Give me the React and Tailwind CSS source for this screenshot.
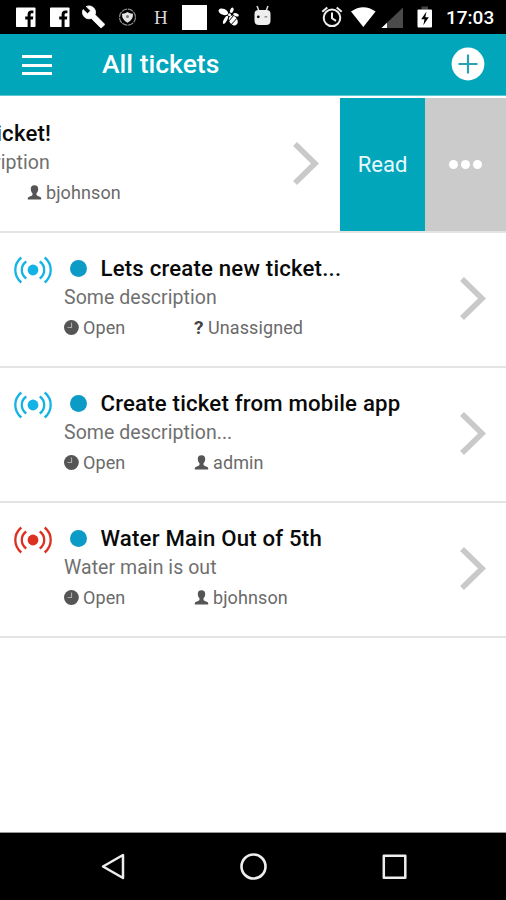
const tickets = [
  { title: 'Lets create new ticket...', description: 'Some description', user: null, tone: 'text-[#13b3e6]' },
  { title: 'Create ticket from mobile app', description: 'Some description...', user: 'admin', tone: 'text-[#13b3e6]' },
  { title: 'Water Main Out of 5th', description: 'Water main is out', user: 'bjohnson', tone: 'text-[#dc3020]' },
];

function Facebook() {
  return (
    <svg width="20" height="34" viewBox="0 0 20 34">
      <rect x="0" y="7.5" width="19.5" height="19.5" rx="0.8" fill="#fff" />
      <path d="M11.6 27v-7.6H9.2v-2.8h2.4v-2.1c0-2.6 1.5-3.9 3.8-3.9h2v2.7h-1.3c-1.2 0-1.5.6-1.5 1.5v1.8h2.7l-.4 2.8h-2.3V27z" fill="#000" />
    </svg>
  );
}

function StatusBar() {
  return (
    <div className="flex h-[34px] shrink-0 items-start bg-black pl-4 text-white">
      <div className="flex w-[66px] gap-[14px]">
        <Facebook />
        <Facebook />
      </div>
      <svg className="shrink-0" width="28" height="34" viewBox="82 0 28 34">
        <path transform="translate(81.500 4.800) scale(1)" d="M22.7 19l-9.1-9.1c.9-2.3.4-5-1.5-6.9-2-2-5-2.4-7.4-1.3L9 6 6 9 1.600 4.700C.4 7.100.9 10.100 2.900 12.100c1.900 1.900 4.600 2.400 6.900 1.500l9.100 9.100c.4.400 1 .400 1.400 0l2.300-2.300c.5-.4.5-1.100.1-1.400z" fill="#fff" stroke="#fff" strokeWidth="0.800" />
      </svg>
      <svg className="shrink-0" width="44" height="34" viewBox="110 0 44 34">
        <circle cx="127.500" cy="17.200" r="8" fill="none" stroke="#8c8c8c" strokeWidth="1.200" strokeDasharray="5.500 0.800" />
        <path d="M122 13.800q3 .2 5.500-1.800q2.500 2 5.500 1.800q.3 6-5.500 9q-5.800-3-5.500-9z" fill="#e4e4e4" />
        <circle cx="127.500" cy="16.500" r="1.500" fill="#777" />
      </svg>
      <span className="w-[28px] pt-[7px] font-['Liberation_Serif',serif] text-[19px] leading-[22px] text-[#d8d8d8]">H</span>
      <span className="mt-[5px] h-[25px] w-[25px] shrink-0 bg-white" />
      <svg className="shrink-0" width="42" height="34" viewBox="207 0 42 34">
        <g fill="#fff">
          <ellipse cx="223.300" cy="11.800" rx="5" ry="3" transform="rotate(22 223.300 11.800)" />
          <ellipse cx="231.800" cy="10.200" rx="1.600" ry="2.800" transform="rotate(25 231.800 10.200)" />
          <circle cx="229.500" cy="14.800" r="1.500" />
          <ellipse cx="225.500" cy="19.800" rx="1.600" ry="4.500" transform="rotate(28 225.500 19.800)" />
          <ellipse cx="236" cy="14.800" rx="2.900" ry="1.500" transform="rotate(18 236 14.800)" />
          <ellipse cx="233.300" cy="20.500" rx="4" ry="5.300" transform="rotate(-35 233.300 20.500)" />
        </g>
        <path d="M228.500 21.500l5-6M231 24.800l6-6.500" stroke="#000" strokeWidth="1" />
      </svg>
      <svg className="shrink-0" width="72" height="34" viewBox="249 0 72 34">
        <path d="M257 6l2 5M268 6l-2 5" stroke="#ddd" strokeWidth="1.500" />
        <path d="M254.500 14q0-4 4-4h8q4 0 4 4v6.500q0 4.500-4.500 4.500h-7q-4.500 0-4.500-4.500z" fill="#eee" />
        <circle cx="258.300" cy="16.800" r="1.400" fill="#111" />
        <path d="M264.500 16.800h2.800" stroke="#888" strokeWidth="1.400" />
      </svg>
      <svg className="shrink-0" width="28" height="34" viewBox="321 0 28 34" fill="none" stroke="#eee" strokeWidth="2">
        <circle cx="332" cy="17.800" r="8.300" />
        <path d="M332 12.500v5.800l4 2.500M322.300 11.800l5-4.200M341.700 11.800l-5-4.200" />
      </svg>
      <svg className="shrink-0" width="62" height="34" viewBox="349 0 62 34">
        <path d="M351 11.500q12.300-8.500 24.600 0L363.300 27z" fill="#fff" />
        <path d="M403 7.500V28h-21.500z" fill="#4a4a4a" />
        <path d="M387 22.800V28h-5.500z" fill="#fff" />
      </svg>
      <svg className="shrink-0" width="35" height="34" viewBox="411 0 35 34">
        <path d="M421.500 6.500h6.500v3h-6.500z" fill="#444" />
        <rect x="417.500" y="9.500" width="14.500" height="18" rx="1" fill="#fff" />
        <path d="M426.500 11.500l-5.300 7.800h3.300l-1.200 6 5.500-8h-3.500z" fill="#000" />
      </svg>
      <span className="pt-[7px] text-[19px] leading-[22px] font-medium">17:03</span>
    </div>
  );
}

function Signal({ tone }) {
  return (
    <svg className={tone} width="40" height="28" viewBox="13 256 40 28" fill="none" stroke="currentColor" strokeWidth="2.300">
      <circle cx="33" cy="270" r="5.400" fill="currentColor" stroke="none" />
      <path d="M26.300 261.500Q21.800 264.500 21.800 270T26.300 278.500M39.700 261.500Q44.200 264.500 44.200 270T39.700 278.500" />
      <path d="M21.300 257.500Q15.300 262.500 15.300 270T21.300 282.500M44.700 257.500Q50.700 262.500 50.700 270T44.700 282.500" />
    </svg>
  );
}

function Chevron() {
  return (
    <svg className="mt-[44px] mr-[19px] shrink-0" width="28" height="44" viewBox="459 277 28 44" fill="none" stroke="#c9c9c9" strokeWidth="5.600">
      <path d="M462 279l20 19.500L462 318" />
    </svg>
  );
}

function Clock() {
  return (
    <svg width="15" height="15" viewBox="0 0 15 15">
      <circle cx="7.400" cy="7.500" r="7.400" fill="#555" />
      <path d="M7.500 2.500v5H3.500" fill="none" stroke="#aaa" strokeWidth="1.200" />
    </svg>
  );
}

function User() {
  return (
    <svg width="15" height="15" viewBox="0 0 15 15" fill="#555">
      <path d="M7.500 0.300c2.700 0 3.700 1.600 3.700 3.800 0 1.800-.7 3.300-1.700 4.200v1.300c0 .6.300.9.900 1.200l2.900 1.200c.6.300.9.700.9 1.300v1.200H.8v-1.200c0-.6.300-1 .9-1.300l2.900-1.200c.6-.3.900-.6.900-1.200V8.300C4.500 7.400 3.800 5.900 3.800 4.100 3.800 1.900 4.800.3 7.500.3z" />
    </svg>
  );
}

function Ticket({ title, description, user, tone, titleClass = '' }) {
  return (
    <div className="flex h-[133px] w-[506px] shrink-0">
      <div className="w-16 shrink-0 pt-[23px] pl-[13px]">
        <Signal tone={tone} />
      </div>
      <div className="min-w-0 flex-1 pt-[21px] whitespace-nowrap">
        <div className="flex h-[29px] items-center">
          <span className="mr-[13.500px] ml-[6px] h-[17px] w-[17px] rounded-full bg-[#0b9bc6]" />
          <span className={`text-[22.200px] leading-[29px] font-medium tracking-[0.190px] text-[#0a0a0a] ${titleClass}`}>{title}</span>
        </div>
        <div className="h-[30px] text-[19.500px] leading-[29px] tracking-[0.050px] text-[#707070]">{description}</div>
        <div className="flex h-[29px] items-center text-[18px] leading-[29px] tracking-[0.1px] text-[#6a6a6a]">
          <div className="flex w-[130px] items-center gap-1">
            <Clock />
            <span>Open</span>
          </div>
          <div className="flex items-center gap-1">
            {user ? <User /> : <span className="w-[10px] text-[19px] font-bold text-[#444]">?</span>}
            <span>{user ?? 'Unassigned'}</span>
          </div>
        </div>
      </div>
      <Chevron />
    </div>
  );
}

export default function App() {
  return (
    <div className="flex h-[900px] w-[506px] flex-col overflow-hidden bg-white font-[Roboto,sans-serif]">
      <StatusBar />
      <header className="flex h-[62px] shrink-0 items-center border-b border-[#5cc6d2] bg-[#02a6bb] pl-[22px] text-white">
        <div className="mt-px flex w-[30px] flex-col gap-[5.600px]">
          <span className="h-[3px] bg-white" />
          <span className="h-[3px] bg-white" />
          <span className="h-[3px] bg-white" />
        </div>
        <h1 className="mb-[2px] ml-[50px] flex-1 text-[26.500px] font-medium">All tickets</h1>
        <svg className="mr-[21px] mb-px" width="34" height="34" viewBox="0 0 34 34">
          <circle cx="17" cy="17" r="16.400" fill="#fff" />
          <path d="M7.500 17h19M17 7.500v19" stroke="#2a9fb2" strokeWidth="2.200" />
        </svg>
      </header>

      <main className="flex flex-1 flex-col">
        <div className="flex h-[137px] shrink-0 overflow-hidden border-b-2 border-[#e4e4e4] pt-[2px]">
          <div className="flex w-[340px] shrink-0 justify-end overflow-hidden pr-px">
            <Ticket title="First ticket!" titleClass="pl-1" description="Some description" user="bjohnson" tone="text-[#13b3e6]" />
          </div>
          <div className="flex w-[85px] items-center justify-center bg-[#02a6bb] text-[22px] text-[#eafafc]">Read</div>
          <div className="flex flex-1 items-center justify-center gap-[3px] bg-[#cbcbcb]">
            <span className="h-[9px] w-[9px] rounded-full bg-white" />
            <span className="h-[9px] w-[9px] rounded-full bg-white" />
            <span className="h-[9px] w-[9px] rounded-full bg-white" />
          </div>
        </div>
        {tickets.map((t) => (
          <div key={t.title} className="h-[135px] shrink-0 border-b-2 border-[#e4e4e4]">
            <Ticket {...t} />
          </div>
        ))}
      </main>

      <nav className="flex h-[68px] shrink-0 items-center border-t border-[#999] bg-black pb-[2px]">
        <svg className="ml-[100px]" width="26" height="28" viewBox="100 852 26 28" fill="none" stroke="#eee" strokeWidth="2.500" strokeLinejoin="round">
          <path d="M103 866.500l20-11.500v23z" />
        </svg>
        <svg className="ml-[113px]" width="28" height="28" viewBox="239 852 28 28" fill="none" stroke="#eee" strokeWidth="2.600">
          <circle cx="253.500" cy="866.500" r="12" />
        </svg>
        <svg className="ml-[114px]" width="28" height="28" viewBox="381 852 28 28" fill="none" stroke="#eee" strokeWidth="2.500" strokeLinejoin="round">
          <rect x="383.800" y="855.800" width="21.500" height="22" />
        </svg>
      </nav>
    </div>
  );
}
